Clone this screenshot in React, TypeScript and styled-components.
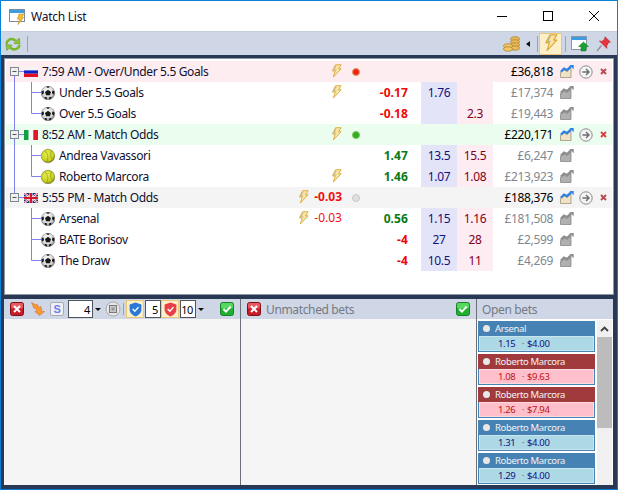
import React from 'react';
import styled, { createGlobalStyle } from 'styled-components';

const GlobalStyle = createGlobalStyle`
    html, body {
        margin: 0;
        padding: 0;
        background: #ffffff;
    }
    * {
        box-sizing: border-box;
    }
`;

const Window = styled.div`
    width: 618px;
    height: 490px;
    display: flex;
    flex-direction: column;
    border: 1px solid #0a7fd6;
    font-family: "Noto Sans", "Open Sans", sans-serif;
    font-size: 12px;
    letter-spacing: -0.36px;
    color: #101030;
    overflow: hidden;
`;

const TitleBar = styled.div`
    height: 30px;
    flex: none;
    display: flex;
    align-items: center;
    background: #ffffff;
    padding-left: 8px;
`;

const TitleText = styled.span`
    margin-left: 5px;
    font-size: 12px;
    letter-spacing: -0.25px;
    flex: 1;
`;

const WindowButton = styled.div`
    width: 46px;
    height: 30px;
    display: flex;
    align-items: center;
    justify-content: center;
`;

const Toolbar = styled.div`
    height: 24px;
    flex: none;
    display: flex;
    align-items: center;
    background: #cfd6e5;
    border-top: 1px solid #c6cede;
    padding: 0 4px;
`;

const Spacer = styled.div`
    flex: 1;
`;

const Gap = styled.span<{ $w: number }>`
    flex: none;
    width: ${p => p.$w}px;
`;

const Separator = styled.div<{ $h?: number; $mx?: number }>`
    width: 1px;
    height: ${p => p.$h ?? 16}px;
    margin: 0 ${p => p.$mx ?? 3}px;
    background: #9aa2b0;
`;

const LeftArrow = styled.div`
    width: 0;
    height: 0;
    margin: 0 6px;
    border-top: 3px solid transparent;
    border-bottom: 3px solid transparent;
    border-right: 4px solid #101010;
`;

const ToggleButton = styled.div<{ $w: number; $h: number }>`
    width: ${p => p.$w}px;
    height: ${p => p.$h}px;
    display: flex;
    align-items: center;
    justify-content: center;
    background: #fdf0c8;
    border: 1px solid #e8c67c;
`;

const Workspace = styled.div`
    flex: 1;
    display: flex;
    flex-direction: column;
    gap: 4px;
    background: #293955;
    padding: 3px 3px 4px;
    min-height: 0;
`;

const GridPanel = styled.div`
    height: 237px;
    flex: none;
    background: #ffffff;
    border: 1px solid #8f97a3;
    padding: 2px 1px;
`;

const Row = styled.div<{ $bg?: string }>`
    height: 21px;
    display: grid;
    grid-template-columns: 260px 76px 23px 56px 36px 36px 60px 59px;
    align-items: stretch;
    background: ${p => p.$bg ?? 'transparent'};
`;

const NameCell = styled.div`
    display: flex;
    align-items: center;
    white-space: nowrap;
`;

const NameText = styled.span`
    margin-left: 4px;
`;

const SportSlot = styled.div`
    width: 14px;
    display: flex;
    justify-content: center;
    flex: none;
`;

const StatusCell = styled.div`
    display: flex;
    align-items: center;
    justify-content: flex-end;
    gap: 5px;
    white-space: nowrap;
`;

const BoltMark = styled.svg`
    margin-bottom: 2px;
    flex: none;
`;

const Delta = styled.span<{ $bold?: boolean }>`
    color: #f01010;
    font-weight: ${p => (p.$bold ? 700 : 400)};
    font-size: 12px;
    letter-spacing: 0;
    margin-bottom: 2px;
`;

const DotCell = styled.div`
    display: flex;
    align-items: center;
    padding-left: 10px;
`;

const Dot = styled.div<{ $fill: string; $edge: string }>`
    width: 8px;
    height: 8px;
    border-radius: 50%;
    background: ${p => p.$fill};
    border: 1px solid ${p => p.$edge};
`;

const ProfitCell = styled.div<{ $green?: boolean }>`
    display: flex;
    align-items: center;
    justify-content: flex-end;
    padding-right: 13px;
    font-weight: 700;
    letter-spacing: 0.1px;
    color: ${p => (p.$green ? '#0a7a14' : '#f00808')};
`;

const OddsCell = styled.div<{ $lay?: boolean }>`
    display: flex;
    align-items: center;
    justify-content: center;
    background: ${p => (p.$lay ? '#fdecf2' : '#e3e4f7')};
    color: ${p => (p.$lay ? '#800020' : '#101080')};
`;

const MatchedCell = styled.div<{ $total?: boolean }>`
    display: flex;
    align-items: center;
    justify-content: flex-end;
    color: ${p => (p.$total ? '#000000' : '#808890')};
`;

const ActionsCell = styled.div`
    display: flex;
    align-items: center;
    padding-left: 7px;
    gap: 5px;
`;

const CloseSlot = styled.div`
    margin-left: 2px;
    display: flex;
`;

const BottomPanels = styled.div`
    flex: 1;
    display: flex;
    min-height: 0;
    margin-right: 1px;
    background: #f5f5f5;
`;

const Pane = styled.div<{ $w: number; $divider?: boolean }>`
    width: ${p => p.$w}px;
    flex: none;
    display: flex;
    flex-direction: column;
    border-left: ${p => (p.$divider ? '1px solid #6c7078' : 'none')};
`;

const PaneHeader = styled.div<{ $pl?: number }>`
    height: 20px;
    flex: none;
    display: flex;
    align-items: center;
    background: #cfd6e5;
    padding: 0 6px 0 ${p => p.$pl ?? 6}px;
`;

const PaneTitle = styled.span`
    color: #747a85;
    margin-left: 5px;
    flex: 1;
`;

const SpinBox = styled.div<{ $w: number }>`
    width: ${p => p.$w}px;
    height: 18px;
    display: flex;
    align-items: center;
    justify-content: flex-end;
    padding-right: 2px;
    background: #ffffff;
    border: 1px solid #50555c;
    font-size: 11px;
    color: #000000;
`;

const DropArrow = styled.div`
    width: 0;
    height: 0;
    margin: 0 0 0 2px;
    border-left: 3px solid transparent;
    border-right: 3px solid transparent;
    border-top: 3px solid #101010;
`;

const BetsBody = styled.div`
    flex: 1;
    display: flex;
    min-height: 0;
    padding: 2px 0 0 1px;
    background: #ffffff;
`;

const BetList = styled.div`
    width: 117px;
    flex: none;
    display: flex;
    flex-direction: column;
    gap: 2px;
`;

const BetCard = styled.div`
    height: 31px;
    flex: none;
    display: flex;
    flex-direction: column;
    background: #4682b4;
    padding-bottom: 1px;
`;

const BetHead = styled.div<{ $lay?: boolean }>`
    height: 15px;
    flex: none;
    display: flex;
    align-items: center;
    gap: 5px;
    padding-left: 5px;
    background: ${p => (p.$lay ? '#a03a3c' : '#4682b4')};
    color: #f4f4f4;
    font-size: 9.5px;
`;

const BetDot = styled.div`
    width: 7px;
    height: 7px;
    border-radius: 50%;
    background: #e8e8e8;
`;

const BetBody = styled.div<{ $lay?: boolean }>`
    flex: 1;
    margin: 0 1px;
    display: flex;
    align-items: center;
    padding-left: 18px;
    font-size: 9.5px;
    background: ${p => (p.$lay ? '#ffc0cb' : '#add8e6')};
    border: 1px solid ${p => (p.$lay ? '#ffd9e0' : '#c8e6ef')};
    color: ${p => (p.$lay ? '#c01010' : '#101080')};
`;

const BetOdds = styled.span`
    width: 24px;
`;

const BetSep = styled.span`
    width: 5px;
    font-size: 8px;
    color: #556;
`;

const Scrollbar = styled.div`
    width: 15px;
    margin-left: 2px;
    margin-top: -1px;
    display: flex;
    flex-direction: column;
    background: #f0f0f0;
`;

const ScrollUp = styled.div`
    height: 17px;
    display: flex;
    align-items: center;
    justify-content: center;
`;

const ScrollThumb = styled.div`
    height: 91px;
    background: #bcbcbc;
`;

// icons
const Bolt = ({ size = 11 }: { size?: number }) => (
    <BoltMark width={size} height={size * 1.25} viewBox="0 0 12 15">
        <path d="M5 .8h6L8.2 5.2H11L2.6 14.2 4.6 7.600H1.600Z" fill="#f9e6a2" stroke="#dca83c" strokeWidth="1" strokeLinejoin="round" />
        <path d="M5.600 2 3 6.400h2.800" fill="none" stroke="#a8a898" strokeWidth=".8" />
    </BoltMark>
);

const SoccerBall = () => (
    <svg width="14" height="14" viewBox="0 0 14 14">
        <defs>
            <radialGradient id="ball" cx="45%" cy="35%" r="70%">
                <stop offset="0" stopColor="#ffffff" />
                <stop offset=".6" stopColor="#d8d8d8" />
                <stop offset="1" stopColor="#707070" />
            </radialGradient>
        </defs>
        <circle cx="7" cy="7" r="6.800" fill="url(#ball)" stroke="#505050" strokeWidth=".4" />
        <path d="M7 3.800 10 6 8.900 9.300H5.100L4 6Z" fill="#181818" />
        <path d="M5 .8 7 2 9 .8 7 .3ZM.8 5 2.600 4.400 3 7 1.600 8.800.5 7ZM13.200 5 11.400 4.400 11 7 12.400 8.800 13.500 7ZM3.600 11 5.600 11 6 13.400 3.800 12.600ZM10.400 11 8.400 11 8 13.400 10.200 12.600Z" fill="#181818" />
    </svg>
);

const TennisBall = () => (
    <svg width="16" height="16" viewBox="0 0 16 16">
        <defs>
            <radialGradient id="tennis" cx="42%" cy="35%" r="70%">
                <stop offset="0" stopColor="#e6ee50" />
                <stop offset=".7" stopColor="#c8d01e" />
                <stop offset="1" stopColor="#6f7410" />
            </radialGradient>
        </defs>
        <circle cx="8" cy="8" r="7.700" fill="url(#tennis)" stroke="#6c6e18" strokeWidth=".6" />
        <path d="M4 1.800C8 5 9 10 6.400 15M12 1.800C10 6 11 11 14.600 12.400" fill="none" stroke="#8e9418" strokeWidth=".8" />
    </svg>
);

const Flag = ({ country }: { country: 'ru' | 'it' | 'uk' }) => (
    <svg width="14" height="10" viewBox="0 0 14 10">
        {country === 'ru' && (
            <>
                <rect width="14" height="3.400" fill="#f4f4f4" />
                <rect y="3.400" width="14" height="3.300" fill="#1020c8" />
                <rect y="6.700" width="14" height="3.300" fill="#e01020" />
            </>
        )}
        {country === 'it' && (
            <>
                <rect width="4.700" height="10" fill="#10a040" />
                <rect x="4.700" width="4.600" height="10" fill="#f8f8f8" />
                <rect x="9.300" width="4.700" height="10" fill="#e01828" />
            </>
        )}
        {country === 'uk' && (
            <>
                <rect width="14" height="10" fill="#20307c" />
                <path d="M0 0 14 10M14 0 0 10" stroke="#ffffff" strokeWidth="2" />
                <path d="M0 0 14 10M14 0 0 10" stroke="#d81828" strokeWidth=".8" />
                <path d="M7 0V10M0 5H14" stroke="#ffffff" strokeWidth="3" />
                <path d="M7 0V10M0 5H14" stroke="#d81828" strokeWidth="2" />
            </>
        )}
    </svg>
);

const HeaderConnector = ({ up, down }: { up: boolean; down: boolean }) => (
    <svg width="18" height="21" viewBox="0 0 18 21">
        {up && <path d="M8.500 0V6" stroke="#8080f0" />}
        {down && <path d="M8.500 15V21" stroke="#8080f0" />}
        <path d="M13 10.500H18" stroke="#8080f0" />
        <rect x="4.500" y="6.500" width="8" height="8" fill="#f0f0f0" stroke="#808890" />
        <path d="M6.500 10.500H10.500" stroke="#505560" />
    </svg>
);

const ChildConnector = ({ main, last }: { main: boolean; last: boolean }) => (
    <svg width="35" height="21" viewBox="0 0 35 21">
        {main && <path d="M8.500 0V21" stroke="#8080f0" />}
        <path d={last ? 'M25.500 0V10.500H35' : 'M25.500 0V21M25.500 10.500H35'} fill="none" stroke="#8080f0" />
    </svg>
);

const ChartIcon = ({ active }: { active: boolean }) => (
    <svg width="14" height="13" viewBox="0 0 14 13">
        <path d="M.5 7.500 4 5l3 1.500L11 3v9.500H.5Z" fill={active ? '#f0e2c4' : '#b0b0b0'} stroke={active ? '#908870' : '#7c7c7c'} strokeWidth=".7" />
        <path d="M.8 6.800 4 3.600l3 1.500L11 1.400" fill="none" stroke={active ? '#2f80e4' : '#8c8c8c'} strokeWidth="2.200" />
        <path d="M9.500.1h4.200v4.200Z" fill={active ? '#2f80e4' : '#8c8c8c'} />
    </svg>
);

const ArrowCircle = () => (
    <svg width="14" height="14" viewBox="0 0 14 14">
        <circle cx="7" cy="7" r="6.200" fill="#f4f4f4" stroke="#8c8c8c" strokeWidth="1" />
        <path d="M3.400 7H9.400M7 4l3 3-3 3" fill="none" stroke="#6c6c6c" strokeWidth="1.400" />
    </svg>
);

const CrossIcon = ({ color }: { color: string }) => (
    <svg width="7" height="7" viewBox="0 0 7 7">
        <path d="M1 1 6 6M6 1 1 6" stroke={color} strokeWidth="1.900" />
    </svg>
);

const AppIcon = () => (
    <svg width="17" height="17" viewBox="0 0 17 17">
        <rect x=".5" y="1.500" width="15" height="12" fill="#ffffff" stroke="#7c8ca0" />
        <rect x="1" y="2" width="14" height="3" fill="#3c9ce0" />
        <path d="M10 6h5l-2.400 3.400h2L9 16.500l1.600-5.400H8.400Z" fill="#f6c030" stroke="#c88a18" strokeWidth=".6" />
    </svg>
);

const RefreshIcon = () => (
    <svg width="16" height="16" viewBox="0 0 16 16">
        <path d="M1.500 8C1.800 4.400 5 2.400 8 3.200c1.200.3 2 .9 2.800 1.700" fill="none" stroke="#7cb82e" strokeWidth="2.600" />
        <path d="M9 7.400 15 8l-.8-6Z" fill="#8cc834" stroke="#4f8a1c" strokeWidth=".5" />
        <path d="M14.500 9c-.5 3-3.400 5-6.500 4.200-1.200-.3-2-.9-2.800-1.700" fill="none" stroke="#7cb82e" strokeWidth="2.600" />
        <path d="M7 9.200 1 8.600l.8 6Z" fill="#8cc834" stroke="#4f8a1c" strokeWidth=".5" />
    </svg>
);

const CoinsIcon = () => (
    <svg width="17" height="16" viewBox="0 0 17 16">
        {[0, 3, 6, 9].map(i => (
            <ellipse key={i} cx="12" cy={3 + i} rx="4.400" ry="2.200" fill="#e8bb5c" stroke="#a87824" strokeWidth=".7" />
        ))}
        {[0, 3].map(i => (
            <ellipse key={i} cx="5" cy={10 + i} rx="4.400" ry="2.200" fill="#f0c868" stroke="#a87824" strokeWidth=".7" />
        ))}
    </svg>
);

const UploadWindowIcon = () => (
    <svg width="18" height="17" viewBox="0 0 18 17">
        <rect x=".5" y="1.500" width="15" height="13" fill="#ffffff" stroke="#8c96a4" />
        <rect x="1" y="2" width="14" height="3" fill="#3c9ce0" />
        <path d="M12.500 7 17.500 11.500H15V16H10V11.500H7.500Z" fill="#18a030" stroke="#0c7a20" strokeWidth=".5" />
    </svg>
);

const PinIcon = () => (
    <svg width="15" height="16" viewBox="0 0 15 16">
        <path d="M1 15 5.500 9.500" stroke="#909090" strokeWidth="1.200" />
        <path d="M9 .8 14.400 6 12.600 6.400 10.600 10 11 12.400 3.400 5 5.800 5.400 8.800 3Z" fill="#e8343c" stroke="#b01c24" strokeWidth=".6" />
    </svg>
);

const RedCloseButton = () => (
    <svg width="14" height="14" viewBox="0 0 14 14">
        <rect x=".5" y=".5" width="13" height="13" rx="2" fill="#c81c28" stroke="#801018" />
        <rect x="1" y="1" width="12" height="5.500" rx="1.500" fill="#e85a60" />
        <path d="M4 4 10 10M10 4 4 10" stroke="#ffffff" strokeWidth="2" />
    </svg>
);

const GreenCheckButton = () => (
    <svg width="14" height="14" viewBox="0 0 14 14">
        <rect x=".5" y=".5" width="13" height="13" rx="2" fill="#20b030" stroke="#18802a" />
        <rect x="1" y="1" width="12" height="5.500" rx="1.500" fill="#58d860" />
        <path d="M3.400 7 6 9.600 10.600 4.600" fill="none" stroke="#ffffff" strokeWidth="2" />
    </svg>
);

const FlameIcon = () => (
    <svg width="14" height="14" viewBox="0 0 14 14">
        <path d="M.5.5 5 3l1-1 2 3.500 2-1 .8 5H13.500L8.500 13.500 3.800 9.500 6 9 4.500 6 3 6.500Z" fill="#f59a30" stroke="#d8602c" strokeWidth=".5" />
    </svg>
);

const SkipIcon = () => (
    <svg width="14" height="14" viewBox="0 0 14 14">
        <rect x=".5" y=".5" width="13" height="13" rx="1.500" fill="#eef0f6" stroke="#a8acb8" />
        <text x="7" y="11" textAnchor="middle" fontFamily="Liberation Sans, sans-serif" fontWeight="700" fontSize="11" fill="#6f80ee">S</text>
    </svg>
);

const StopIcon = () => (
    <svg width="16" height="16" viewBox="0 0 16 16">
        <circle cx="8" cy="8" r="7" fill="#e8e8e8" stroke="#a8a8a8" />
        <rect x="4.500" y="4.500" width="7" height="7" fill="#c8c8c8" stroke="#787878" />
        <rect x="6.500" y="6.500" width="3" height="3" fill="#989898" />
    </svg>
);

const Shield = ({ color }: { color: string }) => (
    <svg width="13" height="15" viewBox="0 0 12 14">
        <path d="M6 .5 11.500 2.400V7c0 3-2.400 5.200-5.500 6.500C2.900 12.200.5 10 .5 7V2.400Z" fill={color} />
        <path d="M3.400 6.600 5.400 8.600 8.800 4.800" fill="none" stroke="#ffffff" strokeWidth="1.300" />
    </svg>
);

const ScrollChevron = () => (
    <svg width="9" height="6" viewBox="0 0 9 6">
        <path d="M1 5 4.500 1.500 8 5" fill="none" stroke="#404040" strokeWidth="1.800" />
    </svg>
);

// data
type Odds = { back?: string; lay?: string };
type Runner = {
    name: string;
    sport: 'soccer' | 'tennis';
    bolt?: boolean;
    delta?: string;
    profit: string;
    green?: boolean;
    odds: Odds;
    matched: string;
};
type Market = {
    title: string;
    flag: 'ru' | 'it' | 'uk';
    bg: string;
    dot: [string, string];
    delta?: string;
    matched: string;
    cross: string;
    runners: Runner[];
};

const markets: Market[] = [
    {
        title: '7:59 AM - Over/Under 5.5 Goals',
        flag: 'ru',
        bg: '#fdecf0',
        dot: ['#f02020', '#e89850'],
        matched: '£36,818',
        cross: '#b84a50',
        runners: [
            { name: 'Under 5.5 Goals', sport: 'soccer', bolt: true, profit: '-0.17', odds: { back: '1.76' }, matched: '£17,374' },
            { name: 'Over 5.5 Goals', sport: 'soccer', profit: '-0.18', odds: { lay: '2.3' }, matched: '£19,443' },
        ],
    },
    {
        title: '8:52 AM - Match Odds',
        flag: 'it',
        bg: '#ebfdee',
        dot: ['#30b020', '#80c050'],
        matched: '£220,171',
        cross: '#d84048',
        runners: [
            { name: 'Andrea Vavassori', sport: 'tennis', profit: '1.47', green: true, odds: { back: '13.5', lay: '15.5' }, matched: '£6,247' },
            { name: 'Roberto Marcora', sport: 'tennis', bolt: true, profit: '1.46', green: true, odds: { back: '1.07', lay: '1.08' }, matched: '£213,923' },
        ],
    },
    {
        title: '5:55 PM - Match Odds',
        flag: 'uk',
        bg: '#f4f4f4',
        dot: ['#e0e0e0', '#c8c8c8'],
        delta: '-0.03',
        matched: '£188,376',
        cross: '#b84a50',
        runners: [
            { name: 'Arsenal', sport: 'soccer', bolt: true, delta: '-0.03', profit: '0.56', green: true, odds: { back: '1.15', lay: '1.16' }, matched: '£181,508' },
            { name: 'BATE Borisov', sport: 'soccer', profit: '-4', odds: { back: '27', lay: '28' }, matched: '£2,599' },
            { name: 'The Draw', sport: 'soccer', profit: '-4', odds: { back: '10.5', lay: '11' }, matched: '£4,269' },
        ],
    },
];

const bets = [
    { name: 'Arsenal', odds: '1.15', stake: '$4.00', lay: false },
    { name: 'Roberto Marcora', odds: '1.08', stake: '$9.63', lay: true },
    { name: 'Roberto Marcora', odds: '1.26', stake: '$7.94', lay: true },
    { name: 'Roberto Marcora', odds: '1.31', stake: '$4.00', lay: false },
    { name: 'Roberto Marcora', odds: '1.29', stake: '$4.00', lay: false },
];

const App = () => (
    <Window>
        <GlobalStyle />
        <TitleBar>
            <AppIcon />
            <TitleText>Watch List</TitleText>
            <WindowButton>
                <svg width="10" height="10" viewBox="0 0 10 10"><path d="M0 5.500H10" stroke="#000" /></svg>
            </WindowButton>
            <WindowButton>
                <svg width="10" height="10" viewBox="0 0 10 10"><rect x=".5" y=".5" width="9" height="9" fill="none" stroke="#000" /></svg>
            </WindowButton>
            <WindowButton>
                <svg width="10" height="10" viewBox="0 0 10 10"><path d="M0 0 10 10M10 0 0 10" stroke="#000" /></svg>
            </WindowButton>
        </TitleBar>
        <Toolbar>
            <RefreshIcon />
            <Separator $mx={6} />
            <Spacer />
            <CoinsIcon />
            <LeftArrow />
            <Separator $mx={1} />
            <ToggleButton $w={23} $h={22}><Bolt size={14} /></ToggleButton>
            <Separator $mx={3} />
            <Gap $w={2} />
            <UploadWindowIcon />
            <Gap $w={7} />
            <PinIcon />
            <Gap $w={2} />
        </Toolbar>
        <Workspace>
            <GridPanel>
                {markets.map((market, m) => (
                    <React.Fragment key={market.title}>
                        <Row $bg={market.bg}>
                            <NameCell>
                                <HeaderConnector up={m > 0} down={m < markets.length - 1} />
                                <Flag country={market.flag} />
                                <NameText>{market.title}</NameText>
                            </NameCell>
                            <StatusCell>
                                <Bolt />
                                {market.delta && <Delta $bold>{market.delta}</Delta>}
                            </StatusCell>
                            <DotCell><Dot $fill={market.dot[0]} $edge={market.dot[1]} /></DotCell>
                            <span />
                            <span />
                            <span />
                            <MatchedCell $total>{market.matched}</MatchedCell>
                            <ActionsCell>
                                <ChartIcon active />
                                <ArrowCircle />
                                <CloseSlot><CrossIcon color={market.cross} /></CloseSlot>
                            </ActionsCell>
                        </Row>
                        {market.runners.map((runner, r) => (
                            <Row key={runner.name}>
                                <NameCell>
                                    <ChildConnector main={m < markets.length - 1} last={r === market.runners.length - 1} />
                                    <SportSlot>{runner.sport === 'soccer' ? <SoccerBall /> : <TennisBall />}</SportSlot>
                                    <NameText>{runner.name}</NameText>
                                </NameCell>
                                <StatusCell>
                                    {runner.bolt && <Bolt />}
                                    {runner.delta && <Delta>{runner.delta}</Delta>}
                                </StatusCell>
                                <span />
                                <ProfitCell $green={runner.green}>{runner.profit}</ProfitCell>
                                <OddsCell>{runner.odds.back}</OddsCell>
                                <OddsCell $lay>{runner.odds.lay}</OddsCell>
                                <MatchedCell>{runner.matched}</MatchedCell>
                                <ActionsCell><ChartIcon active={false} /></ActionsCell>
                            </Row>
                        ))}
                    </React.Fragment>
                ))}
            </GridPanel>
            <BottomPanels>
                <Pane $w={236}>
                    <PaneHeader>
                        <RedCloseButton />
                        <Gap $w={7} />
                        <FlameIcon />
                        <Gap $w={5} />
                        <SkipIcon />
                        <Gap $w={4} />
                        <SpinBox $w={25}>4</SpinBox>
                        <DropArrow />
                        <Gap $w={4} />
                        <StopIcon />
                        <Separator $h={12} $mx={2} />
                        <ToggleButton $w={18} $h={18}><Shield color="#2a78d8" /></ToggleButton>
                        <Gap $w={1} />
                        <SpinBox $w={16}>5</SpinBox>
                        <ToggleButton $w={18} $h={18}><Shield color="#e84048" /></ToggleButton>
                        <Gap $w={1} />
                        <SpinBox $w={16}>10</SpinBox>
                        <DropArrow />
                        <Spacer />
                        <GreenCheckButton />
                    </PaneHeader>
                </Pane>
                <Pane $w={236} $divider>
                    <PaneHeader>
                        <RedCloseButton />
                        <PaneTitle>Unmatched bets</PaneTitle>
                        <GreenCheckButton />
                    </PaneHeader>
                </Pane>
                <Pane $w={137} $divider>
                    <PaneHeader $pl={0}>
                        <PaneTitle>Open bets</PaneTitle>
                    </PaneHeader>
                    <BetsBody>
                        <BetList>
                            {bets.map(bet => (
                                <BetCard key={bet.odds}>
                                    <BetHead $lay={bet.lay}><BetDot />{bet.name}</BetHead>
                                    <BetBody $lay={bet.lay}>
                                        <BetOdds>{bet.odds}</BetOdds>
                                        <BetSep>·</BetSep>
                                        {bet.stake}
                                    </BetBody>
                                </BetCard>
                            ))}
                        </BetList>
                        <Scrollbar>
                            <ScrollUp><ScrollChevron /></ScrollUp>
                            <ScrollThumb />
                        </Scrollbar>
                    </BetsBody>
                </Pane>
            </BottomPanels>
        </Workspace>
    </Window>
);

export default App;
